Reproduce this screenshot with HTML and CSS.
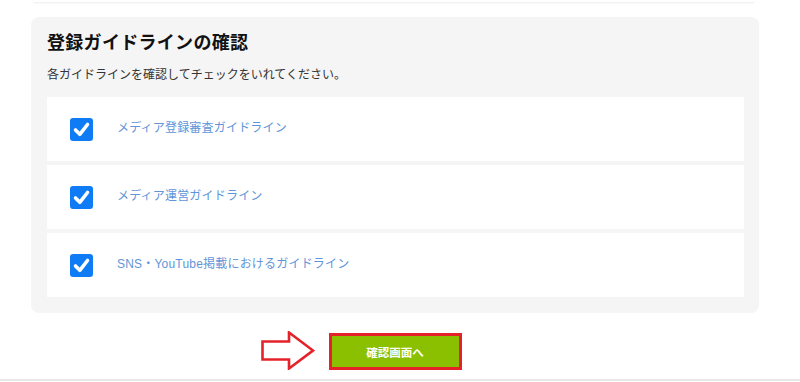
FILE: index.html
```html
<!DOCTYPE html>
<html lang="ja">

<head>
  <meta charset="UTF-8" />
  <meta name="viewport" content="width=device-width, initial-scale=1.0" />
  <title>登録ガイドラインの確認</title>
  <link rel="stylesheet" href="styles.css">
</head>

<body>
  <div class="prev-card"></div>

  <section class="guide-card">
    <h3 class="guide-title">登録ガイドラインの確認</h3>
    <p class="guide-lead">各ガイドラインを確認してチェックをいれてください。</p>

    <div class="guide-list">
      <label class="guide-row">
        <span class="check">
          <svg viewBox="0 0 23 23" width="23" height="23"><polyline points="5.5,12 9.8,16.3 17.5,6.5" /></svg>
        </span>
        <span class="guide-link">メディア登録審査ガイドライン</span>
      </label>
      <label class="guide-row">
        <span class="check">
          <svg viewBox="0 0 23 23" width="23" height="23"><polyline points="5.5,12 9.8,16.3 17.5,6.5" /></svg>
        </span>
        <span class="guide-link">メディア運営ガイドライン</span>
      </label>
      <label class="guide-row">
        <span class="check">
          <svg viewBox="0 0 23 23" width="23" height="23"><polyline points="5.5,12 9.8,16.3 17.5,6.5" /></svg>
        </span>
        <span class="guide-link">SNS・YouTube掲載におけるガイドライン</span>
      </label>
    </div>
  </section>

  <div class="submit-area">
    <div class="submit-wrap">
      <!-- red arrow pointing at the button -->
      <svg class="hint-arrow" viewBox="0 0 54 39" width="54" height="39">
        <polygon points="1.5,10.5 28,10.5 28,1.5 52,19.5 28,37.5 28,28.5 1.5,28.5" />
      </svg>
      <button type="button" class="submit-btn">確認画面へ</button>
    </div>
  </div>

  <footer class="page-foot"></footer>
</body>
</html>
```

FILE: styles.css
```css
body {
    margin: 0;
    background: #fff;
    font-family: "Liberation Sans", "Noto Sans CJK JP", sans-serif;
    color: #222;
}

.prev-card {
    height: 2px;
    margin: 0 45px 0 33px;
    background: #fff;
    border-radius: 0 0 6px 6px;
    box-shadow: 0 1px 2px rgba(0, 0, 0, 0.08);
}

.guide-card {
    margin: 15px 41px 0 31px;
    padding: 13px 15px 16px 16px;
    background: #f5f5f5;
    border-radius: 8px;
}

.guide-title {
    margin: 0;
    font-size: 18px;
    line-height: 26px;
    font-weight: bold;
    letter-spacing: 0.3px;
    color: #111;
}

.guide-lead {
    margin: 10px 0 0;
    font-size: 12px;
    line-height: 18px;
    color: #333;
}

.guide-list {
    display: flex;
    flex-direction: column;
    gap: 4px;
    margin-top: 13px;
}

.guide-row {
    display: flex;
    align-items: center;
    height: 64px;
    padding-left: 23px;
    background: #fff;
}

.check {
    display: flex;
    width: 23px;
    height: 23px;
    border-radius: 3px;
    background: #0f7bf5;
}

.check polyline {
    fill: none;
    stroke: #fff;
    stroke-width: 3.6;
    stroke-linecap: round;
    stroke-linejoin: round;
}

.guide-link {
    margin-left: 24px;
    padding-bottom: 3px;
    font-size: 12px;
    line-height: 16px;
    letter-spacing: 0.2px;
    color: #5f95d8;
}

.submit-area {
    display: flex;
    justify-content: center;
    margin: 20px 41px 0 31px;
}

.submit-wrap {
    position: relative;
}

.hint-arrow {
    position: absolute;
    right: calc(100% + 14px);
    top: -2px;
}

.hint-arrow polygon {
    fill: #fff;
    stroke: #e5222a;
    stroke-width: 2.6;
    stroke-linejoin: miter;
}

.submit-btn {
    display: block;
    width: 133px;
    height: 37px;
    border: 3px solid #e5222a;
    background: #8bc000;
    color: #fff;
    font-family: "Noto Sans CJK JP", sans-serif;
    font-size: 11.5px;
    font-weight: bold;
    padding: 0;
}

.page-foot {
    margin-top: 9px;
    border-top: 2px solid #e8e8e8;
    height: 10px;
}
```
